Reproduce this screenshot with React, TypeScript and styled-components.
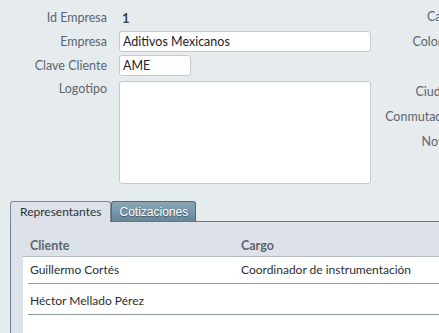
import React, { FC, useState } from "react";
import styled, { createGlobalStyle } from "styled-components";

const GlobalStyle = createGlobalStyle`
  html, body {
    margin: 0;
    padding: 0;
    background: #e6ebee;
    overflow: hidden;
  }
  body {
    font-family: Lato, "Open Sans", sans-serif;
    font-size: 12px;
    color: #2b2f33;
  }
`;

const Page = styled.div`
  width: 439px;
  height: 333px;
  overflow: hidden;
  box-sizing: border-box;
  padding-top: 8px;
`;

const FormArea = styled.div`
  display: flex;
  flex-direction: row;
  align-items: flex-start;
  width: 480px;
`;

const LeftGrid = styled.div`
  display: grid;
  grid-template-columns: 107px 252px;
  column-gap: 12px;
  row-gap: 3px;
  flex-shrink: 0;
`;

const RightGrid = styled.div`
  display: flex;
  flex-direction: column;
  align-items: stretch;
  margin-left: 6px;
  margin-top: -4px;
  width: 77px;
  flex-shrink: 0;
`;

const Label = styled.label<{ $top?: boolean }>`
  color: #5d6670;
  text-align: right;
  white-space: nowrap;
  font-size: 12.5px;
  line-height: ${(p) => (p.$top ? "18px" : "20px")};
  align-self: ${(p) => (p.$top ? "start" : "center")};
  padding-top: ${(p) => (p.$top ? "1px" : "0")};
`;

const SideLabel = styled.div`
  color: #5d6670;
  text-align: right;
  white-space: nowrap;
  font-size: 12.5px;
  line-height: 25px;
  height: 25px;
`;

const StaticValue = styled.div`
  font-weight: 700;
  font-size: 13px;
  color: #3c4147;
  line-height: 20px;
  padding-left: 3px;
`;

const TextInput = styled.input<{ $w?: number }>`
  box-sizing: border-box;
  width: ${(p) => (p.$w ? `${p.$w}px` : "100%")};
  height: 21px;
  border: 1px solid #c2cad1;
  border-radius: 3px;
  background: #fff;
  font-family: Lato, sans-serif;
  font-size: 12.5px;
  color: #1f2226;
  padding: 0 3px;
  outline: none;
`;

const TextArea = styled.textarea`
  box-sizing: border-box;
  width: 100%;
  height: 103px;
  margin-top: 2px;
  border: 1px solid #c2cad1;
  border-radius: 3px;
  background: #fff;
  resize: none;
  outline: none;
  display: block;
`;

const TabsWrap = styled.div`
  margin-top: 17px;
  margin-left: 10px;
  width: 440px;
`;

const TabBar = styled.div`
  display: flex;
  flex-direction: row;
  align-items: flex-end;
  height: 21px;
`;

const Tab = styled.button<{ $active: boolean }>`
  box-sizing: border-box;
  height: 21px;
  padding: 0 ${(p) => (p.$active ? "9px" : "7px")};
  border: 1px solid ${(p) => (p.$active ? "#7a8b97" : "#4f6b7b")};
  border-bottom: ${(p) => (p.$active ? "none" : "1px solid #5f7a8a")};
  border-radius: 3px 3px 0 0;
  background: ${(p) =>
    p.$active ? "#dce2e7" : "linear-gradient(#8aa7b6, #67879a)"};
  color: ${(p) => (p.$active ? "#2e3338" : "#fff")};
  font-family: ${(p) =>
    p.$active ? "Lato, sans-serif" : '"Liberation Sans", Arial, sans-serif'};
  font-size: 12px;
  text-shadow: ${(p) => (p.$active ? "none" : "0 1px 1px #3e5563")};
  line-height: 18px;
  cursor: pointer;
`;

const TabFill = styled.div`
  flex: 1;
  border-bottom: 1px solid #5f7a8a;
`;

const Panel = styled.div`
  background: #dce2e7;
  border-left: 1px solid #6f8290;
  padding: 14px 0 0 12px;
  height: 120px;
`;

const HeaderRow = styled.div`
  display: grid;
  grid-template-columns: 211px 1fr;
  padding-left: 5px;
  height: 20px;
  border-bottom: 1px solid #b3bcc3;
`;

const HeaderCell = styled.div`
  font-weight: 700;
  font-size: 12.5px;
  color: #5d6670;
  padding-left: 2px;
  line-height: 20px;
`;

const Body = styled.div`
  background: #fff;
  height: 100px;
  padding-left: 5px;
`;

const Row = styled.div`
  display: grid;
  grid-template-columns: 211px 1fr;
  align-items: end;
  height: 31px;
  box-sizing: border-box;
  padding-bottom: 5px;
  border-bottom: 1px solid #8f9aa3;
  &:first-child {
    height: 27px;
  }
`;

const Cell = styled.div`
  padding-left: 2px;
  color: #2b2f33;
  white-space: nowrap;
  line-height: 16px;
`;

type Rep = { cliente: string; cargo: string };

const reps: Rep[] = [
  { cliente: "Guillermo Cortés", cargo: "Coordinador de instrumentación" },
  { cliente: "Héctor Mellado Pérez", cargo: "" },
];

const App: FC = () => {
  const [tab, setTab] = useState(0);

  return (
    <Page>
      <GlobalStyle />
      <FormArea>
        <LeftGrid>
          <Label>Id Empresa</Label>
          <StaticValue>1</StaticValue>
          <Label>Empresa</Label>
          <TextInput defaultValue="Aditivos Mexicanos" />
          <Label>Clave Cliente</Label>
          <TextInput $w={72} defaultValue="AME" />
          <Label $top>Logotipo</Label>
          <TextArea />
        </LeftGrid>
        <RightGrid>
          <SideLabel>Calle</SideLabel>
          <SideLabel>Colonia</SideLabel>
          <SideLabel />
          <SideLabel>Ciudad</SideLabel>
          <SideLabel>Conmutador</SideLabel>
          <SideLabel>Notas</SideLabel>
        </RightGrid>
      </FormArea>

      <TabsWrap>
        <TabBar>
          <Tab $active={tab === 0} onClick={() => setTab(0)}>
            Representantes
          </Tab>
          <Tab $active={tab === 1} onClick={() => setTab(1)}>
            Cotizaciones
          </Tab>
          <TabFill />
        </TabBar>
        <Panel>
          <HeaderRow>
            <HeaderCell>Cliente</HeaderCell>
            <HeaderCell>Cargo</HeaderCell>
          </HeaderRow>
          <Body>
            {reps.map((r) => (
              <Row key={r.cliente}>
                <Cell>{r.cliente}</Cell>
                <Cell>{r.cargo}</Cell>
              </Row>
            ))}
          </Body>
        </Panel>
      </TabsWrap>
    </Page>
  );
};

export default App;
